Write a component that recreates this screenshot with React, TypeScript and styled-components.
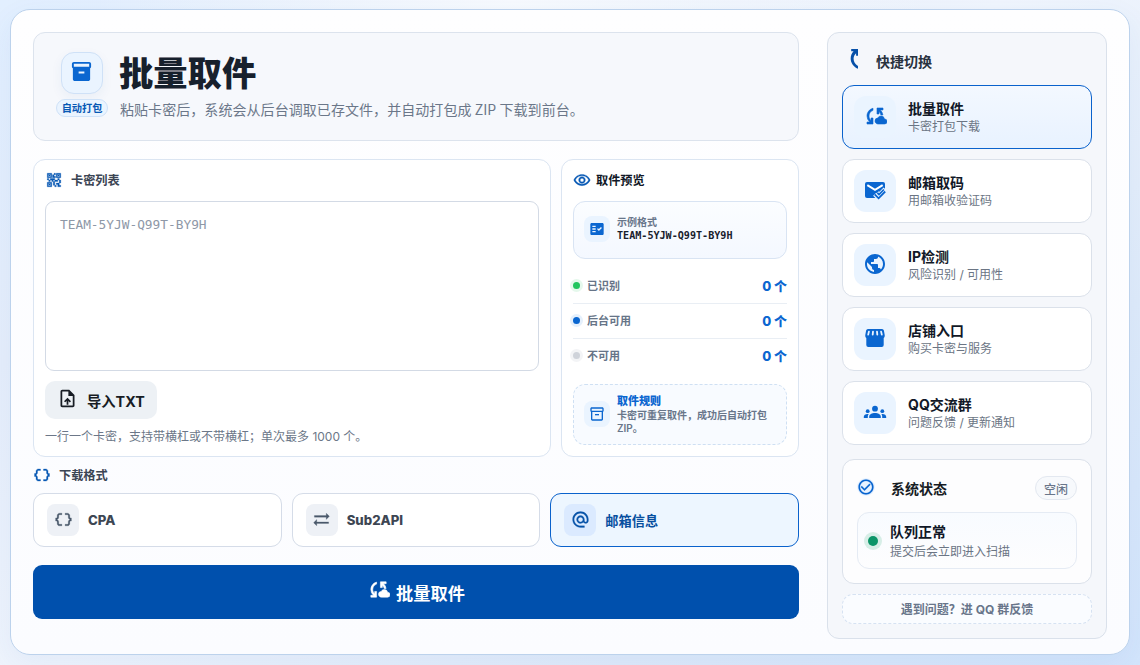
import React from "react";
import styled, { createGlobalStyle } from "styled-components";
import {
  MdInventory2, MdOutlineInventory2, MdQrCode2, MdOutlineRemoveRedEye, MdFactCheck,
  MdOutlineUploadFile, MdDataObject, MdSyncAlt, MdAlternateEmail, MdCloudSync,
  MdPublic, MdCheckCircleOutline,
} from "react-icons/md";

const GlobalStyle = createGlobalStyle`
  *, *::before, *::after { box-sizing: border-box; }
  html, body { margin: 0; height: 665px; overflow: hidden; }
  body {
    font-family: Inter, "Noto Sans CJK SC", sans-serif;
    color: #18202b;
    background:
      radial-gradient(ellipse 420px 240px at 45% 0%, #f7fafe 0%, rgba(247,250,254,0) 100%),
      linear-gradient(145deg, #e2efff 0%, #e6eefb 25%, #f0f5fd 48%, #dfebfa 75%, #d3e5fc 100%);
  }
  svg { display: block; flex: none; }
  svg path[fill="none"] { stroke: none; }
  button, textarea { font: inherit; }
`;

const Shell = styled.div`
  display: flex;
  gap: 28px;
  width: 1120px;
  height: 646px;
  margin: 9px 0 0 10px;
  padding: 22px;
  border: 1px solid #bcd2ec;
  border-radius: 20px;
  background: linear-gradient(180deg, #fefeff, #fbfcff);
  box-shadow: 0 10px 30px rgba(40, 100, 180, 0.07);
`;

const Main = styled.main`
  width: 766px;
  display: flex;
  flex-direction: column;
`;

const Hero = styled.header`
  display: flex;
  height: 109px;
  padding: 19px 22px;
  gap: 12px;
  border: 1px solid #dce3ed;
  border-radius: 12px;
  background: #f6f8fc;
`;

const HeroMark = styled.div`
  display: flex;
  flex-direction: column;
  align-items: center;
  gap: 5px;
  width: 52px;
`;

const HeroIcon = styled.div`
  display: grid;
  place-items: center;
  width: 42px;
  height: 42px;
  padding: 0 1px 3px 0;
  border: 1px solid #cfe1f7;
  border-radius: 13px;
  background: #eaf4ff;
  color: #0a66d0;
  box-shadow: 0 4px 12px rgba(40, 90, 160, 0.06);
`;

const Pill = styled.span`
  display: grid;
  place-items: center;
  height: 18px;
  width: 52px;
  border: 1px solid #cfe2f8;
  border-radius: 9px;
  background: #eaf4ff;
  color: #0758b4;
  font-size: 10.2px;
  line-height: 15px;
  font-weight: 700;
`;

const HeroText = styled.div`
  h1 {
    margin: 1px 0 0 -1px;
    font-size: 34.3px;
    line-height: 42px;
    font-weight: 800;
    color: #17202c;
  }
  p {
    margin: 4px 0 0;
    font-size: 14px;
    line-height: 20px;
    letter-spacing: 0.06px;
    color: #6b7789;
    font-family: "Noto Sans CJK SC", sans-serif;
  }
`;

const Panels = styled.div`
  display: grid;
  grid-template-columns: 518px 238px;
  grid-template-rows: 298px;
  gap: 10px;
  height: 298px;
  margin-top: 18px;
`;

const Panel = styled.section`
  display: flex;
  flex-direction: column;
  min-height: 0;
  padding: 11px;
  border: 1px solid #dbe5f2;
  border-radius: 12px;
  background: #fff;
`;

const PanelTitle = styled.h2<{ $gap?: number; $tone?: string }>`
  display: flex;
  align-items: center;
  gap: ${(p) => p.$gap ?? 8}px;
  height: 18px;
  margin: 0;
  font-size: 12.2px;
  line-height: 17px;
  font-weight: 700;
  color: ${(p) => p.$tone ?? "#3b4554"};
  svg { color: #0758b4; }
  svg path:not([fill="none"]) { stroke: currentColor; stroke-width: 0.4; }
`;

const CodeInput = styled.textarea`
  display: block;
  flex: none;
  width: 494px;
  height: 170px;
  margin: 12px 0 10px;
  padding: 14px;
  border: 1px solid #d3dae5;
  border-radius: 9px;
  background: #fff;
  resize: none;
  outline: none;
  font-family: "DejaVu Sans Mono", monospace;
  font-size: 12.82px;
  line-height: 18px;
  &::placeholder { color: #8e98a7; opacity: 1; }
`;

const ImportButton = styled.button`
  display: flex;
  flex: none;
  align-items: center;
  gap: 9px;
  width: 112px;
  height: 38px;
  padding: 0 12px;
  border: 0;
  border-radius: 10px;
  background: #edf1f5;
  color: #171c24;
  font-size: 14.3px;
  font-weight: 700;
  white-space: nowrap;
  svg { margin-top: -4px; }
`;

const Hint = styled.p`
  margin: 9px 0 0;
  font-size: 12px;
  line-height: 18px;
  color: #6c7788;
`;

const Note = styled.div<{ $dashed?: boolean }>`
  display: flex;
  flex: none;
  align-items: center;
  gap: 7px;
  height: ${(p) => (p.$dashed ? 61 : 58)}px;
  margin-top: ${(p) => (p.$dashed ? 10 : 12)}px;
  padding: 0 10px ${(p) => (p.$dashed ? 1 : 2)}px;
  border: 1px ${(p) => (p.$dashed ? "dashed #cfe0f3" : "solid #d9e4f3")};
  border-radius: 12px;
  background: ${(p) => (p.$dashed ? "#f8fbff" : "linear-gradient(#fbfdff, #f4f8ff)")};
`;

const NoteIcon = styled.div`
  display: grid;
  flex: none;
  place-items: center;
  width: 26px;
  height: 26px;
  border-radius: 8px;
  background: #eaf4ff;
  color: #0a66d0;
`;

const NoteText = styled.div`
  flex: none;
  width: 156px;
  font-size: 10px;
  line-height: 13px;
  font-weight: 600;
  color: #68768a;
  strong { display: block; font-size: 11px; line-height: 15px; color: #0a66d0; }
  code {
    display: block;
    font-family: "DejaVu Sans Mono", monospace;
    font-size: 10.1px;
    font-weight: 700;
    color: #17202c;
  }
`;

const Stats = styled.div`
  margin-top: 10px;
`;

const StatRow = styled.div`
  display: flex;
  align-items: center;
  height: 35px;
  padding-bottom: 2px;
  border-bottom: 1px solid #e9eef4;
  font-size: 11px;
  font-weight: 600;
  color: #667487;
  &:last-child { border-bottom-color: transparent; }
  b { margin-left: auto; font-size: 13px; font-weight: 800; color: #0a66d0; }
`;

const Dot = styled.span<{ $color: string; $halo: string }>`
  width: 7px;
  height: 7px;
  margin-right: 7px;
  border-radius: 50%;
  background: ${(p) => p.$color};
  box-shadow: 0 0 0 3px ${(p) => p.$halo};
`;

const FormatTitle = styled(PanelTitle)`
  margin: 9px 0;
`;

const Formats = styled.div`
  display: grid;
  grid-template-columns: repeat(3, 1fr);
  gap: 10px;
`;

const Format = styled.button<{ $active?: boolean }>`
  display: flex;
  align-items: center;
  gap: 9px;
  height: 54px;
  padding: 0 13px;
  border: 1px solid ${(p) => (p.$active ? "#0a62cc" : "#d5dce8")};
  border-radius: 11px;
  background: ${(p) => (p.$active ? "#edf6ff" : "#fff")};
  color: ${(p) => (p.$active ? "#074f9f" : "#3d4653")};
  font-size: 13.2px;
  font-weight: ${(p) => (p.$active ? 700 : 800)};
`;

const FormatIcon = styled.span<{ $active?: boolean }>`
  display: grid;
  place-items: center;
  width: 32px;
  height: 32px;
  padding-bottom: 2px;
  border-radius: 8px;
  background: ${(p) => (p.$active ? "#dbeaff" : "#eef1f6")};
  color: ${(p) => (p.$active ? "#0753a8" : "#4b596b")};
  svg path:not([fill="none"]) { stroke: currentColor; stroke-width: 0.3; }
`;

const Submit = styled.button`
  display: flex;
  align-items: center;
  justify-content: center;
  gap: 6px;
  height: 54px;
  margin-top: 18px;
  border: 0;
  border-radius: 9px;
  background: #0050ad;
  color: #fff;
  font-size: 17.2px;
  font-weight: 700;
  svg { margin-top: -5px; }
  svg path:not([fill="none"]) { stroke: currentColor; stroke-width: 0.6; }
`;

const Sidebar = styled.aside`
  width: 280px;
  height: 607px;
  padding: 14px;
  border: 1px solid #dae1eb;
  border-radius: 12px;
  background: #f5f7fb;
`;

const SideTitle = styled.h2`
  display: flex;
  align-items: center;
  gap: 17px;
  height: 28px;
  margin: 0 0 10px;
  padding-left: 8px;
  font-size: 14px;
  font-weight: 600;
  color: #29323e;
  svg { color: #0750a8; margin-top: -5px; }
`;

const NavList = styled.nav`
  display: flex;
  flex-direction: column;
  gap: 10px;
`;

const NavItem = styled.a<{ $active?: boolean }>`
  display: flex;
  align-items: center;
  gap: 12px;
  height: 64px;
  padding: 0 11px;
  border: 1px solid ${(p) => (p.$active ? "#0a62cc" : "#dbe1ea")};
  border-radius: 12px;
  background: ${(p) => (p.$active ? "linear-gradient(#f3f8ff, #e8f2ff)" : "#fff")};
`;

const NavIcon = styled.div<{ $bold?: boolean }>`
  display: grid;
  place-items: center;
  width: 42px;
  height: 42px;
  padding-bottom: 2px;
  border-radius: 12px;
  background: #eaf4ff;
  color: #0a66d0;
  svg path:not([fill="none"]) { ${(p) => (p.$bold ? "stroke: currentColor; stroke-width: 0.6;" : "")} }
`;

const Pair = styled.div<{ $spread?: boolean }>`
  display: flex;
  flex-direction: column;
  gap: ${(p) => (p.$spread ? 2 : 0)}px;
  padding-top: ${(p) => (p.$spread ? 1 : 0)}px;
  strong { font-size: 14px; line-height: 18px; font-weight: 700; color: #111827; }
  span { font-size: 12px; line-height: 17px; color: #6b7584; }
`;

const Status = styled.section`
  height: 125px;
  margin-top: 14px;
  padding: 14px;
  border: 1px solid #dbe1ea;
  border-radius: 12px;
  background: #fdfdfe;
`;

const StatusHead = styled.div`
  display: flex;
  align-items: center;
  height: 28px;
  font-size: 14px;
  font-weight: 700;
  color: #171c24;
  svg { margin: -3px 16px 0 0; color: #0a66d0; border-radius: 50%; background: #e9f3ff; }
  svg path:not([fill="none"]) { stroke: currentColor; stroke-width: 0.3; }
`;

const IdleTag = styled.span`
  display: grid;
  place-items: center;
  width: 42px;
  height: 24px;
  margin-left: auto;
  border: 1px solid #e3e8f0;
  border-radius: 12px;
  background: #f7f9fc;
  color: #69768a;
  font-size: 12px;
  font-weight: 500;
`;

const Queue = styled.div`
  display: flex;
  align-items: center;
  gap: 12px;
  height: 57px;
  margin-top: 10px;
  padding: 0 10px;
  border: 1px solid #e5ebf4;
  border-radius: 12px;
  background: linear-gradient(#f8fbff, #fdfdfe);
`;

const QueueDot = styled.i`
  width: 10px;
  height: 10px;
  border-radius: 50%;
  background: #0b9568;
  box-shadow: 0 0 0 4px #d7eee7;
`;

const Feedback = styled.a`
  display: grid;
  place-items: center;
  height: 30px;
  margin-top: 10px;
  padding-bottom: 1px;
  border: 1px dashed #d6e2f2;
  border-radius: 11px;
  background: #fafcff;
  color: #68758a;
  font-size: 12px;
  font-weight: 700;
`;

const TurnIcon = () => (
  <svg width="9" height="22" viewBox="0 0 9 22">
    <path fill="currentColor" d="M1.2 1H8V7.800H6.100V5.200C2.300 8.500 2.700 14.600 8 18V20.800C-.6 16.600-1 8 3.600 3.200H1.200Z" />
  </svg>
);

const MailCheckIcon = () => (
  <svg width="24" height="24" viewBox="0 0 24 24">
    <defs>
      <mask id="mail-check-gap">
        <rect width="24" height="24" fill="white" />
        <polyline points="11.7,16.2 15.8,20.3 23,12.9" fill="none" stroke="black" strokeWidth="4.4" />
        <polyline points="14.6,14.4 16.4,16.2 21.800,10.600" fill="none" stroke="black" strokeWidth="3.4" />
        <polygon points="15.8,20.3 12,24 24,24 24,12" fill="black" />
      </mask>
    </defs>
    <rect x="2" y="4" width="20" height="16" rx="2" fill="currentColor" mask="url(#mail-check-gap)" />
    <polyline points="4.3,7.200 12,11.800 19.700,7.200" fill="none" stroke="#fff" strokeWidth="2" />
    <polyline points="11.7,16.400 15.6,20.300 22.200,13.500" fill="none" stroke="currentColor" strokeWidth="1.8" />
    <polyline points="14.4,14.900 16,16.500 20.900,11.500" fill="none" stroke="currentColor" strokeWidth="1.7" />
  </svg>
);

const ShopIcon = () => (
  <svg width="24" height="24" viewBox="0 0 24 24">
    <path fill="currentColor" d="M5 3H19a2 2 0 0 1 1.9 1.5L21.7 9c.2 1.3-.2 2.3-1 3v7a2 2 0 0 1-2 2H5.3a2 2 0 0 1-2-2v-7c-.8-.7-1.2-1.7-1-3l.8-4.5A2 2 0 0 1 5 3Z" />
    <g stroke="#eaf4ff" strokeWidth="1.8" strokeLinecap="round">
      <line x1="5.9" y1="5.6" x2="5.2" y2="8.6" />
      <line x1="10" y1="5.6" x2="9.7" y2="8.6" />
      <line x1="14" y1="5.6" x2="14.3" y2="8.6" />
      <line x1="18.1" y1="5.6" x2="18.8" y2="8.6" />
    </g>
  </svg>
);

const PeopleIcon = () => (
  <svg width="24" height="24" viewBox="0 0 24 24" fill="currentColor">
    <circle cx="12" cy="8.7" r="2.9" />
    <circle cx="4.7" cy="11.2" r="1.9" />
    <circle cx="19.3" cy="11.2" r="1.9" />
    <path d="M6.2 18v-1.4c0-2.4 2.800-3.700 5.800-3.700s5.800 1.300 5.800 3.700V18ZM.8 18v-1.200c0-2 2-3.200 4.900-2.800C5 14.800 4.800 15.600 4.800 16.600V18ZM23.200 18v-1.200c0-2-2-3.200-4.900-2.800.7.8.9 1.600.9 2.600V18Z" />
  </svg>
);

const links = [
  { title: "批量取件", sub: "卡密打包下载", icon: <MdCloudSync size={24} />, active: true },
  { title: "邮箱取码", sub: "用邮箱收验证码", icon: <MailCheckIcon /> },
  { title: "IP检测", sub: "风险识别 / 可用性", icon: <MdPublic size={24} /> },
  { title: "店铺入口", sub: "购买卡密与服务", icon: <ShopIcon /> },
  { title: "QQ交流群", sub: "问题反馈 / 更新通知", icon: <PeopleIcon /> },
];

const stats = [
  { label: "已识别", color: "#22c55e", halo: "#e5f8ec" },
  { label: "后台可用", color: "#0a66d0", halo: "#e5f0fc" },
  { label: "不可用", color: "#cfd3da", halo: "#f3f4f6" },
];

const formats = [
  { label: "CPA", icon: <MdDataObject size={19} /> },
  { label: "Sub2API", icon: <MdSyncAlt size={19} /> },
  { label: "邮箱信息", icon: <MdAlternateEmail size={19} />, active: true },
];

export default function App() {
  return (
    <>
      <GlobalStyle />
      <Shell>
        <Main>
          <Hero>
            <HeroMark>
              <HeroIcon><MdInventory2 size={23} /></HeroIcon>
              <Pill>自动打包</Pill>
            </HeroMark>
            <HeroText>
              <h1>批量取件</h1>
              <p>粘贴卡密后，系统会从后台调取已存文件，并自动打包成 ZIP 下载到前台。</p>
            </HeroText>
          </Hero>

          <Panels>
            <Panel>
              <PanelTitle><MdQrCode2 size={18} />卡密列表</PanelTitle>
              <CodeInput placeholder="TEAM-5YJW-Q99T-BY9H" />
              <ImportButton><MdOutlineUploadFile size={21} />导入TXT</ImportButton>
              <Hint>一行一个卡密，支持带横杠或不带横杠；单次最多 1000 个。</Hint>
            </Panel>
            <Panel>
              <PanelTitle $gap={5} $tone="#111827"><MdOutlineRemoveRedEye size={18} />取件预览</PanelTitle>
              <Note>
                <NoteIcon><MdFactCheck size={16} /></NoteIcon>
                <NoteText>示例格式<code>TEAM-5YJW-Q99T-BY9H</code></NoteText>
              </Note>
              <Stats>
                {stats.map((s) => (
                  <StatRow key={s.label}>
                    <Dot $color={s.color} $halo={s.halo} />{s.label}<b>0 个</b>
                  </StatRow>
                ))}
              </Stats>
              <Note $dashed>
                <NoteIcon><MdOutlineInventory2 size={16} /></NoteIcon>
                <NoteText><strong>取件规则</strong>卡密可重复取件，成功后自动打包 ZIP。</NoteText>
              </Note>
            </Panel>
          </Panels>

          <FormatTitle><MdDataObject size={18} />下载格式</FormatTitle>
          <Formats>
            {formats.map((f) => (
              <Format key={f.label} $active={f.active}>
                <FormatIcon $active={f.active}>{f.icon}</FormatIcon>{f.label}
              </Format>
            ))}
          </Formats>
          <Submit><MdCloudSync size={23} />批量取件</Submit>
        </Main>

        <Sidebar>
          <SideTitle><TurnIcon />快捷切换</SideTitle>
          <NavList>
            {links.map((l) => (
              <NavItem key={l.title} $active={l.active}>
                <NavIcon $bold={l.active}>{l.icon}</NavIcon>
                <Pair><strong>{l.title}</strong><span>{l.sub}</span></Pair>
              </NavItem>
            ))}
          </NavList>
          <Status>
            <StatusHead><MdCheckCircleOutline size={18} />系统状态<IdleTag>空闲</IdleTag></StatusHead>
            <Queue>
              <QueueDot />
              <Pair $spread><strong>队列正常</strong><span>提交后会立即进入扫描</span></Pair>
            </Queue>
          </Status>
          <Feedback>遇到问题？进 QQ 群反馈</Feedback>
        </Sidebar>
      </Shell>
    </>
  );
}
